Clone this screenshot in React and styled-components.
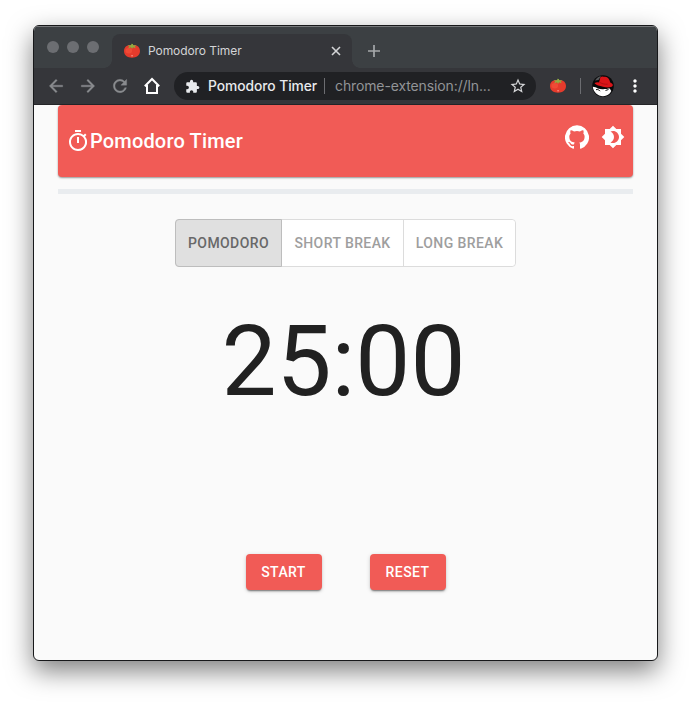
import React from "react";
import styled, { createGlobalStyle } from "styled-components";
import {
  MdArrowBack,
  MdArrowForward,
  MdRefresh,
  MdExtension,
  MdStarBorder,
  MdMoreVert,
  MdOutlineTimer,
  MdBrightness4,
} from "react-icons/md";

const GlobalStyle = createGlobalStyle`
  * { box-sizing: border-box; }
  body { margin: 0; background: #fff; overflow: hidden; font-family: Roboto, sans-serif; }
  svg { display: block; flex: none; }
`;

const Desktop = styled.div`
  height: 702px;
  padding: 25px 33px 41px;
`;

const Window = styled.div`
  width: 625px;
  height: 636px;
  border: 1px solid #17181a;
  border-radius: 6px;
  overflow: hidden;
  background: #fafafa;
  box-shadow: 0 10px 26px rgba(0, 0, 0, 0.5);
`;

const TabStrip = styled.div`
  height: 42px;
  display: flex;
  background: #3c4043;
  border-top: 1px solid #77797b;
`;

const Lights = styled.div`
  display: flex;
  gap: 8px;
  padding: 14px 0 0 13px;
  width: 78px;
`;

const Light = styled.span`
  width: 12px;
  height: 12px;
  border-radius: 50%;
  background: #6c6e72;
`;

const Tab = styled.div`
  position: relative;
  width: 240px;
  height: 34px;
  margin-top: 7px;
  border-radius: 8px 8px 0 0;
  background: #35363a;
  display: flex;
  align-items: center;
  padding: 0 10px 1px 12px;
  gap: 8px;
  color: #d3d4d6;
  &::before,
  &::after {
    content: "";
    position: absolute;
    bottom: 0;
    width: 8px;
    height: 8px;
  }
  &::before {
    left: -8px;
    background: radial-gradient(circle at 0 0, #3c4043 7.5px, #35363a 8px);
  }
  &::after {
    right: -8px;
    background: radial-gradient(circle at 100% 0, #3c4043 7.5px, #35363a 8px);
  }
`;

const TabTitle = styled.span`
  flex: 1;
  font: 400 12px/16px Inter, sans-serif;
  letter-spacing: -0.07px;
`;

const NewTab = styled.div`
  padding: 15px 0 0 13px;
  color: #a5a8ab;
`;

const Toolbar = styled.div`
  height: 37px;
  display: flex;
  align-items: center;
  padding: 0 10px 0 12px;
  background: #35363a;
  border-bottom: 1px solid #242528;
`;

const NavIcons = styled.div`
  display: flex;
  gap: 12px;
  width: 128px;
  color: #898b8e;
`;

const NavIcon = styled.span`
  path:last-child {
    stroke: currentColor;
    stroke-width: 0.4px;
  }
  svg {
    stroke: none;
  }
`;

const AddressBar = styled.div`
  width: 362px;
  height: 28px;
  border-radius: 14px;
  background: #202124;
  display: flex;
  align-items: center;
  padding: 0 9px 0 11px;
  font: 400 14px/20px Inter, sans-serif;
  color: #e8eaed;
`;

const SiteName = styled.span`
  width: 124px;
  padding-left: 8px;
  white-space: nowrap;
  font-size: 13.8px;
  font-weight: 500;
  letter-spacing: -0.05px;
`;

const Address = styled.span`
  flex: 1;
  padding-left: 10px;
  color: #929497;
  white-space: nowrap;
  letter-spacing: -0.12px;
`;

const Divider = styled.span`
  width: 1px;
  height: 16px;
  background: #6c6d71;
`;

const Extensions = styled.div`
  flex: 1;
  display: flex;
  align-items: center;
  padding-left: 14px;
  color: #fff;
`;

const Page = styled.main`
  padding: 0 24px;
  display: flex;
  flex-direction: column;
  align-items: center;
`;

const AppBar = styled.header`
  width: 575px;
  height: 72px;
  padding: 0 8px;
  display: flex;
  align-items: center;
  border-radius: 4px;
  background: #f15b56;
  color: #fff;
  box-shadow: 0 1px 2px rgba(0, 0, 0, 0.4);
`;

const Title = styled.h1`
  flex: 1;
  margin: 0;
  font: 500 20px/32px Roboto, sans-serif;
  letter-spacing: 0.17px;
`;

const Actions = styled.div`
  display: flex;
  gap: 12px;
  margin-bottom: 8px;
`;

const Progress = styled.div`
  width: 575px;
  height: 5px;
  margin-top: 12px;
  background: #e9ecef;
`;

const Modes = styled.div`
  display: flex;
  width: 341px;
  height: 48px;
  margin-top: 25px;
  border: 1px solid #dcdcdc;
  border-radius: 4px;
  background: #fff;
`;

const Mode = styled.button`
  margin: ${(p) => (p.$selected ? "-1px 0 -1px -1px" : "0")};
  width: ${(p) => p.$width}px;
  padding: 0;
  border: ${(p) => (p.$selected ? "1px solid #bdbdbd" : "0")};
  border-left: ${(p) => (p.$divided ? "1px solid #dcdcdc" : p.$selected ? "1px solid #bdbdbd" : "0")};
  border-radius: ${(p) => (p.$selected ? "4px 0 0 4px" : "0 4px 4px 0")};
  background: ${(p) => (p.$selected ? "#e0e0e0" : "#fff")};
  color: ${(p) => (p.$selected ? "#686868" : "#9e9e9e")};
  font: 500 14px/24px Roboto, sans-serif;
  letter-spacing: 0.4px;
  white-space: nowrap;
`;

const Clock = styled.div`
  margin: 37px 4px 0 0;
  height: 115px;
  font: 400 98px/115px Roboto, sans-serif;
  color: #212121;
`;

const Controls = styled.div`
  display: flex;
  gap: 48px;
  margin-top: 135px;
`;

const Action = styled.button`
  width: 76px;
  height: 36px;
  padding: 0;
  border: 0;
  border-radius: 4px;
  background: #f15b56;
  color: #fff;
  font: 500 14px/24px Roboto, sans-serif;
  letter-spacing: 0.4px;
  box-shadow: 0 2px 2px -1px rgba(0, 0, 0, 0.5), 0 1px 4px rgba(0, 0, 0, 0.16);
`;

const ProfileSlot = styled.span`
  margin: 0 11px;
`;

const DividerSlot = styled.span`
  margin-left: 14px;
  display: flex;
`;

const CloseIcon = () => (
  <svg width="12" height="12" viewBox="0 0 12 12" stroke="currentColor" strokeWidth="1.6">
    <path d="m2 2 8 8M10 2l-8 8" />
  </svg>
);

const PlusIcon = () => (
  <svg width="18" height="18" viewBox="0 0 18 18" stroke="currentColor" strokeWidth="1.7">
    <path d="M9 3v12M3 9h12" />
  </svg>
);

const HomeIcon = () => (
  <svg width="20" height="20" viewBox="0 0 20 20" fill="none" stroke="#fff" strokeWidth="2">
    <path d="M2.800 10.200 10 3l7.200 7.200M5 9v8h10V9" />
  </svg>
);

const Tomato = () => (
  <svg width="16" height="16" viewBox="0 0 16 16">
    <path d="M8 2.200C12 1.200 16 3.500 16 8c0 4.500-3.500 6.700-8 6.700S0 12.500 0 8C0 3.500 4 1.200 8 2.200Z" fill="#e53b2c" />
    <ellipse cx="4.800" cy="7.800" rx="3.300" ry="2.700" fill="#f04a36" />
    <path d="M3.500 2.500 7 2.200 7.500.8l1.400.2.300 1.300 3.500.2-2 1 1 1.800-2.700-1L8 6 7 4.200l-3 1.200 1.400-2Z" fill="#8fac42" />
    <path d="M7.200 12.800h1.800" stroke="#ffb3a8" strokeWidth=".8" />
  </svg>
);

const Avatar = () => (
  <svg width="22" height="22" viewBox="0 0 22 22">
    <circle cx="11" cy="11" r="10.800" fill="#09090a" />
    <path d="M3 5.500C4.500 3 7 1.200 9 1L6.500 5Z" fill="#55575a" />
    <path d="M.8 11.800c1.800.2 3.700.5 5 1.700 2.500.8 4.700 1 6.700.5 2.500.3 4-.6 5.200-.4l1.600 2.500c-1.500 3.200-4.400 5.100-8.300 5.100-5.200 0-9.700-4-10.200-9.400Z" fill="#fff" />
    <path d="M4 14.700c1.800-.7 3 .5 4.200 1.300M13.500 15.500l3-1" stroke="#111" strokeWidth="1" fill="none" />
    <path d="M2.500 8.200c1-.8 2.700-1 4.500-.7L8.500 2c1.700-1.200 3.200-.2 4.700-.2 2.800.3 4.300 2.200 5 5.700 2 1 3.200 2 2.400 3.500-1.800 1.800-6 1.700-9.700.7-3.500-.8-6.700-1.700-8.400-3.500Z" fill="#db1418" />
    <path d="M7.200 7c2.500 1.800 5.500 2.500 8.500 2.200" stroke="#b20e12" fill="none" />
  </svg>
);

const GitHubIcon = () => (
  <svg width="24" height="24" viewBox="0 0 24 24" fill="currentColor">
    <path d="M12 .3a12 12 0 0 0-3.800 23.400c.6.1.8-.3.8-.6v-2c-3.300.7-4-1.600-4-1.600-.6-1.400-1.400-1.800-1.400-1.800-1-.7.1-.7.1-.7 1.200 0 1.900 1.200 1.900 1.200 1 1.800 2.800 1.300 3.500 1 0-.8.4-1.300.7-1.600-2.700-.3-5.500-1.300-5.500-6 0-1.200.5-2.300 1.300-3.100-.2-.4-.6-1.600 0-3.200 0 0 1-.3 3.400 1.200a11.500 11.500 0 0 1 6 0c2.300-1.500 3.300-1.200 3.300-1.200.6 1.600.2 2.800 0 3.200.9.8 1.300 1.900 1.300 3.200 0 4.600-2.800 5.600-5.500 5.900.5.4.9 1 .9 2.200v3.300c0 .3.1.7.8.6A12 12 0 0 0 12 .3" />
  </svg>
);

export default function App() {
  return (
    <Desktop>
      <GlobalStyle />
      <Window>
        <TabStrip>
          <Lights>
            <Light />
            <Light />
            <Light />
          </Lights>
          <Tab>
            <Tomato />
            <TabTitle>Pomodoro Timer</TabTitle>
            <CloseIcon />
          </Tab>
          <NewTab>
            <PlusIcon />
          </NewTab>
        </TabStrip>
        <Toolbar>
          <NavIcons>
            <NavIcon><MdArrowBack size={20} strokeWidth={0} /></NavIcon>
            <NavIcon><MdArrowForward size={20} strokeWidth={0} /></NavIcon>
            <NavIcon><MdRefresh size={20} strokeWidth={0} /></NavIcon>
            <HomeIcon />
          </NavIcons>
          <AddressBar>
            <MdExtension size={15} />
            <SiteName>Pomodoro Timer</SiteName>
            <Divider />
            <Address>chrome-extension://ln...</Address>
            <MdStarBorder size={18} color="#d5d6d8" />
          </AddressBar>
          <Extensions>
            <Tomato />
            <DividerSlot>
              <Divider />
            </DividerSlot>
            <ProfileSlot>
              <Avatar />
            </ProfileSlot>
            <MdMoreVert size={20} />
          </Extensions>
        </Toolbar>
        <Page>
          <AppBar>
            <MdOutlineTimer size={24} />
            <Title>Pomodoro Timer</Title>
            <Actions>
              <GitHubIcon />
              <MdBrightness4 size={24} />
            </Actions>
          </AppBar>
          <Progress />
          <Modes>
            <Mode $selected $width={107}>POMODORO</Mode>
            <Mode $width={121}>SHORT BREAK</Mode>
            <Mode $divided $width={112}>LONG BREAK</Mode>
          </Modes>
          <Clock>25:00</Clock>
          <Controls>
            <Action>START</Action>
            <Action>RESET</Action>
          </Controls>
        </Page>
      </Window>
    </Desktop>
  );
}
